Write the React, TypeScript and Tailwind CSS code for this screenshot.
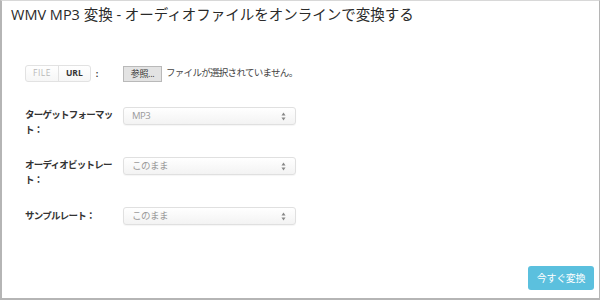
import React from 'react'

const font = { fontFamily: '"Open Sans", "Noto Sans CJK JP", sans-serif' }

const SelectBox = ({ value }: { value: string }) => {
    return (
        <div className='w-[173px] h-[18px] flex items-center justify-between pl-2 pr-[9px] border border-[#e0e0e0] rounded-[3px] bg-gradient-to-b from-white to-[#f3f3f3] shadow-[0_1px_1px_rgba(0,0,0,0.04)]'>
            <span className='text-[9.5px] tracking-[-0.5px] text-[#9a9a9a]'>{value}</span>
            <svg width="5" height="9" viewBox="0 0 5 9" className='text-[#888]'>
                <path d="M2.5 0.5 L4.5 3.5 L0.5 3.5 Z" fill="currentColor" />
                <path d="M2.5 8.5 L4.5 5.5 L0.5 5.5 Z" fill="currentColor" />
            </svg>
        </div>
    )
}

const App = () => {
    return (
        <div style={font} className='w-[600px] h-[300px] bg-white border border-[#b5b5b5] border-l-2 border-b-2 border-t-[#d8d8d8] flex flex-col'>
            <h1 className='pl-[9px] pt-[3px] text-[14.5px] leading-[22px] text-[#2a2a2a] font-normal'>
                WMV MP3 変換 - オーディオファイルをオンラインで変換する
            </h1>

            <div className='mt-[39px] pl-[23px] grid grid-cols-[90px_180px] gap-x-[8px] text-[#333]'>
                {/* file / url */}
                <div className='flex items-center h-[17px]'>
                    <div className='flex h-[17px] border border-[#e2e2e2] rounded-[3px] bg-gradient-to-b from-white to-[#f6f6f6] text-[8.5px]'>
                        <span className='px-[7px] flex items-center text-[#b8b8b8] tracking-[0.5px] border-r border-[#e2e2e2]'>FILE</span>
                        <span className='px-[7px] flex items-center font-bold text-[#333]'>URL</span>
                    </div>
                    <span className='ml-[5px] text-[9px] font-bold'>:</span>
                </div>
                <div className='flex items-center h-[17px]'>
                    <span className='h-[16px] w-[39px] flex items-center justify-center bg-[#e3e3e3] border border-[#b9b9b9] text-[9px] tracking-[-0.3px] text-[#333]'>参照...</span>
                    <span className='ml-[4px] text-[9.5px] tracking-[-0.7px] text-[#444]'>ファイルが選択されていません。</span>
                </div>

                {/* target format */}
                <div className='mt-[25px] text-[9.5px] tracking-[-0.75px] font-bold leading-[15px]'>ターゲットフォーマット：</div>
                <div className='mt-[25px]'>
                    <SelectBox value="MP3" />
                </div>

                {/* bitrate */}
                <div className='mt-[20px] text-[9.5px] tracking-[-0.75px] font-bold leading-[15px]'>オーディオビットレート：</div>
                <div className='mt-[20px]'>
                    <SelectBox value="このまま" />
                </div>

                {/* sample rate */}
                <div className='mt-[20px] h-[18px] flex items-center text-[9.5px] tracking-[-0.75px] font-bold'>サンプルレート：</div>
                <div className='mt-[20px]'>
                    <SelectBox value="このまま" />
                </div>
            </div>

            <div className='mt-auto flex justify-end pr-[5px] pb-[8px]'>
                <button className='w-[66px] h-[24px] rounded-[3px] bg-[#5bc0de] text-white text-[10px] tracking-[-0.3px]'>今すぐ変換</button>
            </div>
        </div>
    )
}

export default App
